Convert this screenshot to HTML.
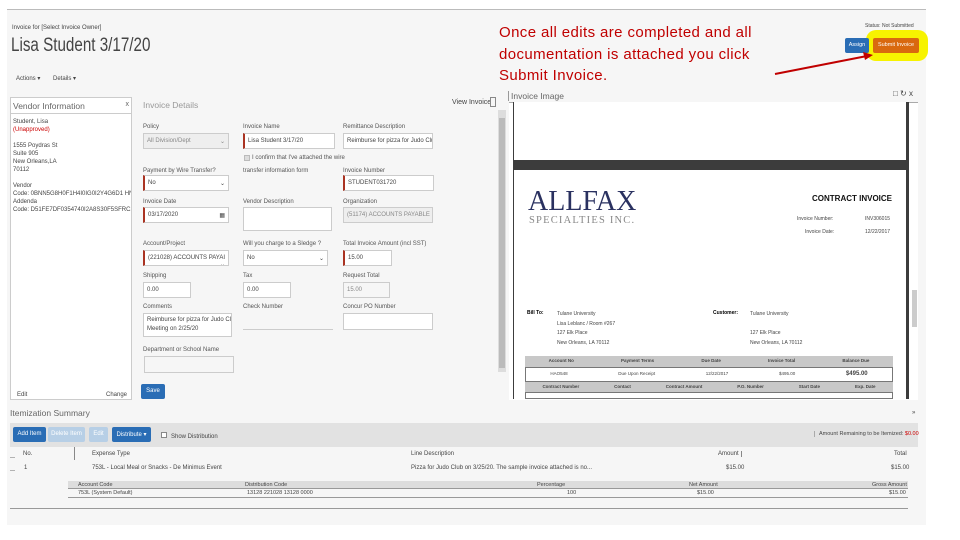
<!DOCTYPE html>
<html><head><meta charset="utf-8"><style>
*{box-sizing:border-box;margin:0;padding:0}
body{width:960px;height:540px;background:#fff;position:relative;overflow:hidden;font-family:"Liberation Sans",sans-serif;color:#333}
.a{position:absolute;white-space:nowrap}
.s{font-size:6px;color:#444}
.lbl{font-size:6px;color:#555}
.in{position:absolute;height:16px;background:#fff;border:1px solid #ccc;font-size:6px;padding:4px 3px;color:#444;white-space:nowrap;overflow:hidden}
.req{border-left:2px solid #a32;}
.dis{background:#eee;color:#888}
.btn{position:absolute;font-size:6px;color:#fff;text-align:center;border-radius:2px}
</style></head><body>
<div class="a" style="left:7px;top:9px;width:919px;height:516px;background:#f6f6f6;border-top:1px solid #bbb"></div>
<div class="a s" style="left:12px;top:25px">Invoice for [Select Invoice Owner]</div>
<div class="a" style="left:11px;top:35px;font-size:19px;color:#444;font-weight:300;transform:scaleX(0.8);transform-origin:left">Lisa Student 3/17/20</div>
<div class="a s" style="left:16px;top:75px">Actions ▾</div>
<div class="a s" style="left:53px;top:75px">Details ▾</div>

<!-- vendor -->
<div class="a" style="left:10px;top:97px;width:122px;height:303px;background:#fff;border:1px solid #ccc"></div>
<div class="a" style="left:11px;top:98px;width:120px;height:16px;border-bottom:1px solid #ccc;font-size:8.5px;color:#666;padding:3px 2px">Vendor Information<span style="float:right;font-size:7px">x</span></div>
<div class="a s" style="left:13px;top:118px;line-height:8px;width:118px;overflow:hidden">Student, Lisa<br><span style="color:#c00">(Unapproved)</span><br><br>1555 Poydras St<br>Suite 905<br>New Orleans,LA<br>70112<br><br>Vendor<br>Code: 0BNN5G8H0F1H4I0IG0I2Y4G6D1 HNGHI1II<br>Addenda<br>Code: D51FE7DF0354740I2A8S30F5SFRC1C640</div>
<div class="a s" style="left:17px;top:392px">Edit</div>
<div class="a s" style="left:106px;top:392px">Change</div>

<!-- invoice details -->
<div class="a" style="left:143px;top:100px;font-size:8.5px;color:#999">Invoice Details</div>
<div class="a s" style="left:452px;top:99px;font-size:7px">View Invoice</div>
<div class="a" style="left:490px;top:97px;width:6px;height:10px;border:1px solid #888"></div>
<div class="a" style="left:498px;top:110px;width:8px;height:262px;background:#ddd"></div>
<div class="a" style="left:499px;top:118px;width:6px;height:250px;background:#bbb"></div>

<div class="a lbl" style="left:143px;top:124px">Policy</div>
<div class="in dis" style="left:143px;top:133px;width:86px">All Division/Dept <span style="float:right">⌄</span></div>
<div class="a lbl" style="left:243px;top:124px">Invoice Name</div>
<div class="in req" style="left:243px;top:133px;width:92px">Lisa Student 3/17/20</div>
<div class="a lbl" style="left:343px;top:124px">Remittance Description</div>
<div class="in" style="left:343px;top:133px;width:90px">Reimburse for pizza for Judo Club \</div>
<div class="a" style="left:244px;top:155px;width:6px;height:6px;background:#ddd;border:1px solid #bbb"></div>
<div class="a lbl" style="left:252px;top:155px">I confirm that I've attached the wire</div>
<div class="a lbl" style="left:243px;top:168px">transfer information form</div>
<div class="a lbl" style="left:143px;top:168px">Payment by Wire Transfer?</div>
<div class="in req" style="left:143px;top:175px;width:86px">No <span style="float:right">⌄</span></div>
<div class="a lbl" style="left:343px;top:168px">Invoice Number</div>
<div class="in req" style="left:343px;top:175px;width:91px">STUDENT031720</div>
<div class="a lbl" style="left:143px;top:199px">Invoice Date</div>
<div class="in req" style="left:143px;top:207px;width:86px">03/17/2020 <span style="float:right">▦</span></div>
<div class="a lbl" style="left:243px;top:199px">Vendor Description</div>
<div class="in" style="left:243px;top:207px;width:89px;height:24px"></div>
<div class="a lbl" style="left:343px;top:199px">Organization</div>
<div class="in dis" style="left:343px;top:207px;width:90px">(51174) ACCOUNTS PAYABLE</div>
<div class="a lbl" style="left:143px;top:241px">Account/Project</div>
<div class="in req" style="left:143px;top:250px;width:86px">(221028) ACCOUNTS PAYAI <span style="float:right">⌄</span></div>
<div class="a lbl" style="left:243px;top:241px">Will you charge to a Sledge ?</div>
<div class="in" style="left:243px;top:250px;width:85px">No <span style="float:right">⌄</span></div>
<div class="a lbl" style="left:343px;top:241px">Total Invoice Amount (incl SST)</div>
<div class="in req" style="left:343px;top:250px;width:49px">15.00</div>
<div class="a lbl" style="left:143px;top:273px">Shipping</div>
<div class="in" style="left:143px;top:282px;width:48px">0.00</div>
<div class="a lbl" style="left:243px;top:273px">Tax</div>
<div class="in" style="left:243px;top:282px;width:48px">0.00</div>
<div class="a lbl" style="left:343px;top:273px">Request Total</div>
<div class="in dis" style="left:343px;top:282px;width:47px;background:#f6f6f6">15.00</div>
<div class="a lbl" style="left:143px;top:304px">Comments</div>
<div class="in" style="left:143px;top:313px;width:89px;height:24px;line-height:9px;padding-top:2px">Reimburse for pizza for Judo Club<br>Meeting on 2/25/20</div>
<div class="a lbl" style="left:243px;top:304px">Check Number</div>
<div class="a" style="left:243px;top:329px;width:90px;border-top:1px solid #ccc"></div>
<div class="a lbl" style="left:343px;top:304px">Concur PO Number</div>
<div class="in" style="left:343px;top:313px;width:90px;height:17px"></div>
<div class="a lbl" style="left:143px;top:347px">Department or School Name</div>
<div class="in" style="left:144px;top:356px;width:90px;height:17px;background:#f6f6f6"></div>
<div class="btn" style="left:141px;top:384px;width:24px;height:15px;background:#2a6db5;padding-top:4px">Save</div>

<!-- invoice image -->
<div class="a" style="left:508px;top:91px;font-size:8.5px;color:#666;border-left:1px solid #999;padding-left:2px">Invoice Image</div>
<div class="a s" style="left:893px;top:89px;font-size:8px">□ ↻ x</div>
<div class="a" style="left:509px;top:102px;width:409px;height:298px;background:#fff;border-top:1px solid #aaa"></div>
<div class="a" style="left:513px;top:102px;width:396px;height:297px;background:#3c3c3c"></div>
<div class="a" style="left:514px;top:102px;width:392px;height:58px;background:#fff"></div>
<div class="a" style="left:514px;top:170px;width:392px;height:229px;background:#fff"></div>
<div class="a" style="left:912px;top:290px;width:5px;height:37px;background:#ccc"></div>
<div class="a" style="left:528px;top:188px;font-family:'Liberation Serif',serif;font-size:28px;color:#2a3160;line-height:28px">ALLFAX</div>
<div class="a" style="left:529px;top:215px;font-family:'Liberation Serif',serif;font-size:10.5px;color:#888;letter-spacing:1.2px">SPECIALTIES INC.</div>
<div class="a" style="left:812px;top:194px;font-size:8px;font-weight:bold;color:#111">CONTRACT INVOICE</div>
<div class="a s" style="left:797px;top:216px;font-size:5px">Invoice Number:</div>
<div class="a s" style="left:865px;top:216px;font-size:5px">INV306015</div>
<div class="a s" style="left:805px;top:229px;font-size:5px">Invoice Date:</div>
<div class="a s" style="left:865px;top:229px;font-size:5px">12/22/2017</div>
<div class="a s" style="left:527px;top:310px;font-size:5px;font-weight:bold;color:#000">Bill To:</div>
<div class="a s" style="left:557px;top:310px;font-size:5px;line-height:9.5px">Tulane University<br>Lisa Leblanc / Room #267<br>127 Elk Place<br>New Orleans, LA 70112</div>
<div class="a s" style="left:713px;top:310px;font-size:5px;font-weight:bold;color:#000">Customer:</div>
<div class="a s" style="left:750px;top:310px;font-size:5px;line-height:9.5px">Tulane University<br><br>127 Elk Place<br>New Orleans, LA 70112</div>
<div class="a" style="left:525px;top:356px;width:368px;height:43px;border:1px solid #777;background:#fff"></div>
<div class="a" style="left:525px;top:356px;width:368px;height:12px;background:#c8c8c8;border-bottom:1px solid #777"></div>
<div class="a" style="left:525px;top:381px;width:368px;height:12px;background:#c8c8c8;border-top:1px solid #777;border-bottom:1px solid #777"></div>
<div class="a s" style="left:525px;top:358px;font-size:4.5px;width:368px;display:flex;justify-content:space-around;font-weight:bold"><span>Account No</span><span>Payment Terms</span><span>Due Date</span><span>Invoice Total</span><span>Balance Due</span></div>
<div class="a s" style="left:525px;top:371px;font-size:4.5px;width:368px;display:flex;justify-content:space-around"><span>HAO548</span><span>Due Upon Receipt</span><span>12/22/2017</span><span>$495.00</span><span style="font-weight:bold;font-size:6px">$495.00</span></div>
<div class="a s" style="left:525px;top:384px;font-size:4.5px;width:368px;display:flex;justify-content:space-around;font-weight:bold"><span>Contract Number</span><span>Contact</span><span>Contract Amount</span><span>P.O. Number</span><span>Start Date</span><span>Exp. Date</span></div>

<!-- annotation -->
<div class="a" style="left:499px;top:22px;font-size:15px;line-height:21.5px;color:#c00000;letter-spacing:0.4px">Once all edits are completed and all<br>documentation is attached you click<br>Submit Invoice.</div>
<div class="a s" style="left:865px;top:23px;font-size:5px">Status: Not Submitted</div>
<div class="a" style="left:866px;top:30px;width:62px;height:31px;background:#f7f300;border-radius:10px"></div>
<div class="btn" style="left:845px;top:38px;width:24px;height:15px;background:#2a6db5;padding-top:4px;font-size:5.5px">Assign</div>
<div class="btn" style="left:873px;top:38px;width:46px;height:15px;background:#d9690f;padding-top:4px;font-size:5.5px">Submit Invoice</div>
<svg class="a" style="left:760px;top:45px" width="120" height="40"><line x1="15" y1="29" x2="107" y2="11" stroke="#c00000" stroke-width="2"/><polygon points="113,10 103,7 105,15" fill="#c00000"/></svg>

<!-- itemization -->
<div class="a" style="left:10px;top:408px;font-size:8.5px;color:#666">Itemization Summary</div>
<div class="a s" style="left:912px;top:410px">»</div>
<div class="a" style="left:10px;top:423px;width:908px;height:24px;background:#e2e2e2"></div>
<div class="btn" style="left:13px;top:427px;width:33px;height:15px;background:#2a6db5;padding-top:4px">Add Item</div>
<div class="btn" style="left:48px;top:427px;width:37px;height:15px;background:#b7cfe6;padding-top:4px">Delete Item</div>
<div class="btn" style="left:89px;top:427px;width:19px;height:15px;background:#b7cfe6;padding-top:4px">Edit</div>
<div class="btn" style="left:112px;top:427px;width:39px;height:15px;background:#2a6db5;padding-top:4px">Distribute ▾</div>
<div class="a" style="left:161px;top:432px;width:6px;height:6px;border:1px solid #888;background:#fff"></div>
<div class="a s" style="left:171px;top:434px">Show Distribution</div>
<div class="a s" style="left:814px;top:431px;border-left:1px solid #aaa;padding-left:4px;font-size:5.5px">Amount Remaining to be Itemized: <span style="color:#c00">$0.00</span></div>
<div class="a" style="left:74px;top:447px;height:13px;border-left:1px solid #888"></div>
<div class="a s" style="left:10px;top:455px;font-size:5px">—</div>
<div class="a s" style="left:10px;top:468px;font-size:5px">—</div>
<div class="a s" style="left:23px;top:451px">No.</div>
<div class="a s" style="left:92px;top:451px">Expense Type</div>
<div class="a s" style="left:411px;top:451px">Line Description</div>
<div class="a s" style="left:718px;top:451px;border-right:1px solid #888;padding-right:2px">Amount</div>
<div class="a s" style="left:894px;top:451px">Total</div>
<div class="a s" style="left:24px;top:465px">1</div>
<div class="a s" style="left:92px;top:465px">753L - Local Meal or Snacks - De Minimus Event</div>
<div class="a s" style="left:411px;top:465px">Pizza for Judo Club on 3/25/20. The sample invoice attached is no...</div>
<div class="a s" style="left:726px;top:465px">$15.00</div>
<div class="a s" style="left:891px;top:465px">$15.00</div>
<div class="a" style="left:68px;top:481px;width:840px;height:8px;background:#ddd;border-bottom:1px solid #999"></div>
<div class="a" style="left:68px;top:489px;width:840px;height:9px;border-bottom:1px solid #999"></div>
<div class="a s" style="left:78px;top:482px;font-size:5.5px">Account Code</div>
<div class="a s" style="left:245px;top:482px;font-size:5.5px">Distribution Code</div>
<div class="a s" style="left:537px;top:482px;font-size:5.5px">Percentage</div>
<div class="a s" style="left:689px;top:482px;font-size:5.5px">Net Amount</div>
<div class="a s" style="left:872px;top:482px;font-size:5.5px">Gross Amount</div>
<div class="a s" style="left:78px;top:490px;font-size:5.5px">753L (System Default)</div>
<div class="a s" style="left:247px;top:490px;font-size:5.5px">13128 221028 13128 0000</div>
<div class="a s" style="left:567px;top:490px;font-size:5.5px">100</div>
<div class="a s" style="left:697px;top:490px;font-size:5.5px">$15.00</div>
<div class="a s" style="left:889px;top:490px;font-size:5.5px">$15.00</div>
<div class="a" style="left:10px;top:508px;width:898px;border-top:1px solid #999"></div>
</body></html>
